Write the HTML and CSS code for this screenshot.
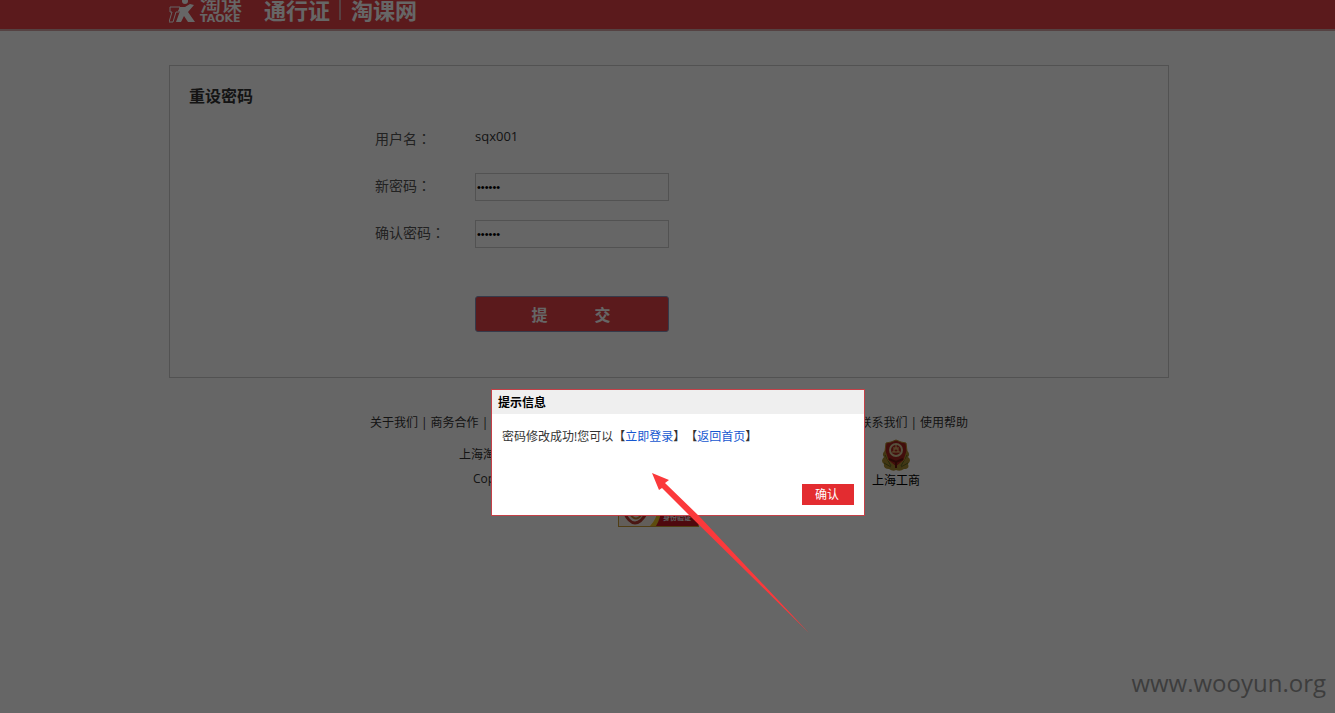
FILE: index.html
```html
<!DOCTYPE html>
<html lang="zh-CN">
<head>
<meta charset="utf-8">
<title>重设密码</title>
<link rel="stylesheet" href="styles.css">
</head>
<body>
<header class="header">
  <div class="wrap brand">
    <svg class="mark" viewBox="0 0 27 28" aria-hidden="true">
      <path d="M1 11h10l-1 5H7L4 26H0l3-10H1z" fill="none" stroke="#fff" stroke-width="1"/>
      <path d="M11 11h5l5-3 4 1-6 7 7 10h-7l-4-6-3 6H7l4-11H9z" fill="#fff"/>
      <circle cx="16" cy="5" r="3" fill="#fff"/>
    </svg>
    <div class="logo"><span class="logo-cn">淘课</span><span class="logo-en">TAOKE</span></div>
    <div class="site"><span>通行证</span><span class="bar"></span><span>淘课网</span></div>
  </div>
</header>
<main class="page">
  <section class="wrap panel">
    <h1 class="title">重设密码</h1>
    <form class="form">
      <div class="row"><span class="label">用户名<span class="colon" lang="zh-TW">：</span></span><span class="user">sqx001</span></div>
      <div class="row"><label class="label" for="pw">新密码<span class="colon" lang="zh-TW">：</span></label><input class="field" id="pw" type="password" value="sqx001"></div>
      <div class="row"><label class="label" for="pw2">确认密码<span class="colon" lang="zh-TW">：</span></label><input class="field" id="pw2" type="password" value="sqx001"></div>
      <button class="submit" type="button"><span>提</span><span>交</span></button>
    </form>
  </section>
  <footer class="footer">
    <nav class="links">
      <div class="group"><a href="#">关于我们</a><span>|</span><a href="#">商务合作</a><span>|</span></div>
      <div class="group"><a href="#">联系我们</a><span>|</span><a href="#">使用帮助</a></div>
    </nav>
    <div class="legal">
      <div class="company"><p>上海淘课</p><p class="copy">Copyright</p></div>
      <a class="registry" href="#">
        <svg class="emblem" viewBox="0 0 30 32" aria-hidden="true">
          <path d="M5 11Q0 14 3 18Q-1 22 3 25Q2 30 8 30Q12 33 15 31Q19 33 23 30Q29 30 27 25Q31 21 27 18Q30 14 25 11Z" fill="#a68a32"/>
          <path d="M4 16l6 11M26 16l-6 11M3 24l7 4M27 24l-7 4" stroke="#5c6325" stroke-width="1"/>
          <path d="M15 1l5 2 5 1 1 8-3 9-8 7-8-7-3-9 1-8 5-1z" fill="#a52420" stroke="#b58b2b"/>
          <circle cx="15" cy="11" r="6" fill="#ad2822" stroke="#d7c898" stroke-width="2"/>
          <path d="M11 13h8M13 13v-3h4v3M12 9h6M15 6v3" stroke="#e5ce7c" fill="none"/>
          <path d="M8 20l7 3 7-3M15 23v6" stroke="#65170f" fill="none" stroke-width="2"/>
        </svg>
        <span>上海工商</span>
      </a>
    </div>
    <div class="badge">
      <svg class="seal" viewBox="0 0 44 26" aria-hidden="true">
        <path d="M0 0h44v26H0z" fill="#f5ece1"/>
        <path d="M36 0h8v26H34Q42 12 36 0z" fill="#c31724"/>
        <path d="M34 0Q44 12 31 26h6Q46 11 38 0z" fill="#e8bd22"/>
        <path d="M5 12Q10 23 16 23T28 12" fill="none" stroke="#b93a30" stroke-width="3"/>
        <path d="M11 14q6 9 12 0" fill="none" stroke="#c18135" stroke-width="2"/>
      </svg>
      <span>身份验证</span>
    </div>
  </footer>
</main>
<div class="shade"></div>
<section class="dialog" role="dialog" aria-labelledby="dialog-title">
  <h2 class="dialog-title" id="dialog-title">提示信息</h2>
  <p class="message">密码修改成功!您可以【<a href="#">立即登录</a>】【<a href="#">返回首页</a>】</p>
  <div class="actions"><button class="confirm" type="button">确认</button></div>
</section>
<svg class="arrow" viewBox="0 0 160 162" aria-hidden="true"><path d="M0 0L17 7L13 10L47 43L157 160L38 43L10 15L7 17Z" fill="#fb393b"/></svg>
<div class="watermark">www.wooyun.org</div>
</body>
</html>
```
FILE: styles.css
```css
* { box-sizing: border-box; }
body {
  margin: 0;
  min-height: 100vh;
  position: relative;
  overflow: hidden;
  background: #fff;
  color: #333;
  font: 12px/24px "Open Sans", "Noto Sans CJK SC", sans-serif;
  text-spacing-trim: space-all;
}
h1, h2, p { margin: 0; }
a { color: inherit; text-decoration: none; }
button, input { font-family: inherit; }
.header {
  height: 31px;
  padding-left: 3px;
  overflow: hidden;
  background: #e34146;
  border-bottom: 2px solid #d5a5a6;
  display: flex;
  align-items: flex-end;
}
.wrap { width: 100%; max-width: 1000px; margin: 0 auto; }
.brand { display: flex; align-items: flex-end; color: #fff; }
.mark { width: 27px; height: 28px; margin: 0 4px 5px 0; }
.logo { display: flex; flex-direction: column; width: 64px; margin-bottom: 5px; }
.logo-cn { font-size: 21px; line-height: 22px; font-weight: 500; }
.logo-en { font: 700 11px/10px "DejaVu Sans", sans-serif; }
.site { display: flex; align-items: center; font-size: 22px; line-height: 38px; font-weight: 700; }
.bar { width: 2px; height: 20px; margin: 0 10px 0 9px; background: #dda0a2; }
.page { padding: 34px 0 0 3px; }
.panel { min-height: 313px; padding: 18px 19px; border: 1px solid #ccc; }
.title { font-size: 16px; line-height: 24px; font-weight: 700; }
.form { margin: 16px 0 0 186px; }
.row { display: flex; align-items: flex-start; height: 47px; }
.label { width: 100px; font-size: 14px; line-height: 28px; color: #555; }
.colon { font-family: "Noto Sans CJK TC", sans-serif; }
.user { font-size: 13px; }
.field {
  width: 194px;
  height: 28px;
  margin-top: 2px;
  padding: 0 1px;
  border: 1px solid #ccc;
  background: #fff;
  color: #000;
  font: 11px "Liberation Sans", sans-serif;
}
.submit {
  display: flex;
  justify-content: center;
  align-items: center;
  gap: 47px;
  width: 194px;
  height: 36px;
  margin: 31px 0 0 100px;
  padding: 0 2px 0 0;
  border: 1px solid #8792b8;
  border-radius: 3px;
  background: #e34146;
  color: #fff;
  font-size: 16px;
  font-weight: 700;
}
.footer { width: 598px; max-width: 100%; margin: 33px auto 0; }
.links { display: flex; justify-content: space-between; }
.group { display: flex; gap: 3px; }
.legal { display: flex; justify-content: space-between; padding: 4px 48px 0 89px; }
.company { padding-top: 4px; }
.copy { padding-left: 14px; }
.registry { display: flex; flex-direction: column; align-items: center; color: #000; }
.emblem { width: 30px; height: 32px; }
.registry span { line-height: 20px; }
.badge {
  display: flex;
  width: 81px;
  height: 28px;
  margin: 8px auto 0 248px;
  border: 1px solid #c99b35;
  background: #c31724;
  color: #eee;
  font-size: 7px;
  line-height: 35px;
  font-weight: 700;
}
.seal { width: 44px; height: 26px; }
.shade { position: absolute; inset: 0; background: rgba(0, 0, 0, .6); }
.dialog {
  position: absolute;
  left: 491px;
  top: 389px;
  width: 374px;
  border: 1px solid #c54047;
  background: #fff;
}
.dialog-title { padding: 1px 6px 0; background: #efefef; color: #000; font-size: 12px; line-height: 23px; font-weight: 700; }
.message { padding: 11px 10px 0; }
.message a { color: #1557d0; }
.actions { display: flex; justify-content: flex-end; padding: 35px 10px 10px; }
.confirm { width: 52px; height: 21px; padding: 0 2px 0 0; border: 0; background: #e32c30; color: #fff; font-size: 12px; line-height: 21px; }
.arrow { position: absolute; left: 652px; top: 473px; width: 160px; height: 162px; }
.watermark { position: absolute; right: 9px; bottom: 12px; color: #3d3d3d; font-size: 24px; line-height: 36px; }
```
